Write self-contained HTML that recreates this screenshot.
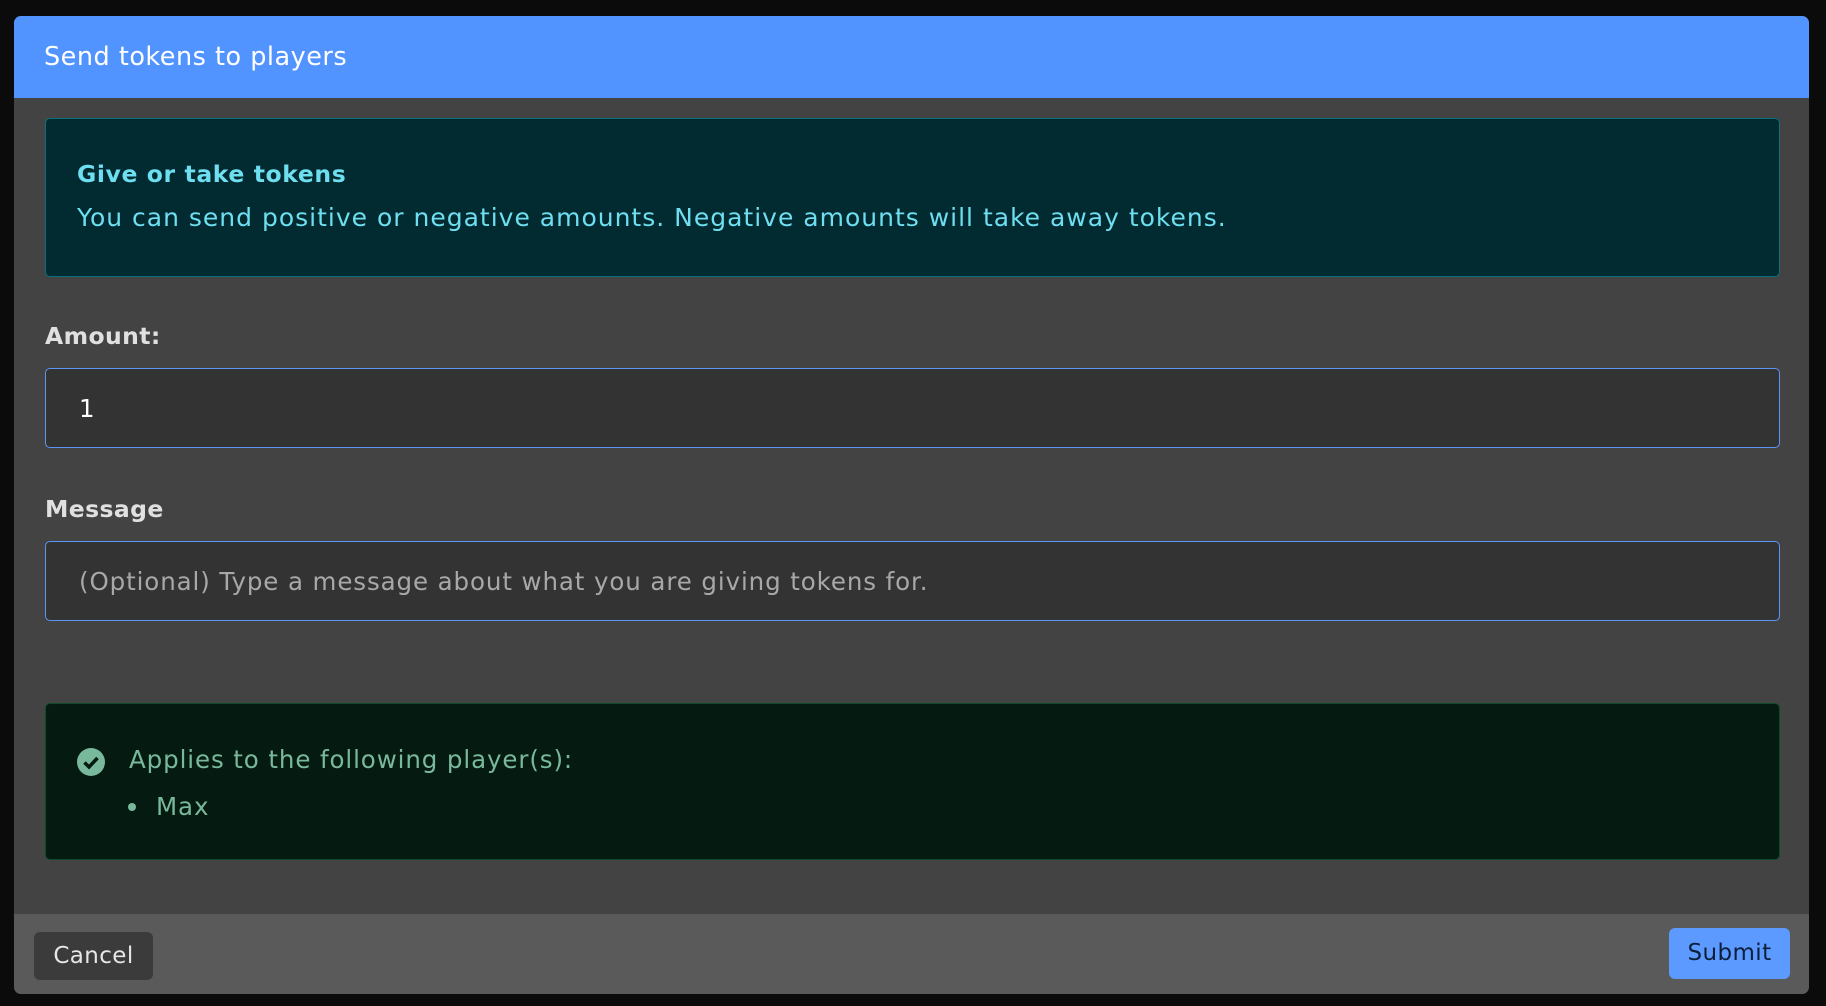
<!DOCTYPE html>
<html><head><meta charset="utf-8"><style>
*{box-sizing:border-box;margin:0;padding:0}
body{width:1826px;height:1006px;background:#0b0b0b;font-family:"DejaVu Sans","Liberation Sans",sans-serif;position:relative;overflow:hidden}
.modal{position:absolute;left:14px;top:16px;width:1795px;height:978px;background:#434343;border-radius:7px;overflow:hidden}
.hdr{position:absolute;left:0;top:0;right:0;height:82px;background:#5294ff;color:#fff;font-size:25.5px;letter-spacing:0.5px;padding-left:30px;line-height:82px}
.info{position:absolute;left:31px;top:102px;width:1735px;height:159px;background:#022a31;border:1.5px solid #0c6f7e;border-radius:5px;color:#6edff0;padding:0 31px}
.info b{display:block;margin-top:41px;font-size:23.5px;letter-spacing:0.6px}
.info p{font-size:25px;margin-top:15px;letter-spacing:1px}
.lbl{position:absolute;left:31px;color:#e0e0e0;font-weight:bold;font-size:23.5px;letter-spacing:0.4px}
.inp{position:absolute;left:31px;width:1735px;height:80px;background:#333;border:1.5px solid #5c96f5;border-radius:5px;font-size:24.5px;letter-spacing:0.9px;padding-left:33px;line-height:80px}
.ok{position:absolute;left:31px;top:687px;width:1735px;height:157px;background:#051b12;border:1.5px solid #0e4b2c;border-radius:5px;color:#78b99b;font-size:24.5px;letter-spacing:0.9px}
.foot{position:absolute;left:0;top:898px;right:0;height:80px;background:#5a5a5a}
.btn{position:absolute;border-radius:6px;font-size:23px;letter-spacing:0.4px;text-align:center}
</style></head><body>
<div class="modal">
<div class="hdr">Send tokens to players</div>
<div class="info"><b>Give or take tokens</b><p>You can send positive or negative amounts. Negative amounts will take away tokens.</p></div>
<div class="lbl" style="top:306px">Amount:</div>
<div class="inp" style="top:352px;color:#fff">1</div>
<div class="lbl" style="top:479px">Message</div>
<div class="inp" style="top:525px;color:#a8a8a8">(Optional) Type a message about what you are giving tokens for.</div>
<div class="ok">
<svg style="position:absolute;left:31px;top:44px" width="28" height="28" viewBox="0 0 28 28"><circle cx="14" cy="14" r="14" fill="#78b99b"/><path d="M7.5 14.5l4.5 4.5 8.5-9" stroke="#051b12" stroke-width="3.5" fill="none"/></svg>
<div style="position:absolute;left:83px;top:41px">Applies to the following player(s):</div>
<div style="position:absolute;left:82px;top:99px;width:8px;height:8px;border-radius:50%;background:#78b99b"></div>
<div style="position:absolute;left:110px;top:88px">Max</div>
</div>
<div class="foot">
<div class="btn" style="left:20px;top:18px;width:119px;height:48px;background:#3b3b3b;color:#e6e6e6;line-height:48px">Cancel</div>
<div class="btn" style="left:1655px;top:14px;width:121px;height:51px;background:#5c9aff;color:#0c1f3a;line-height:51px">Submit</div>
</div>
</div>
</body></html>
